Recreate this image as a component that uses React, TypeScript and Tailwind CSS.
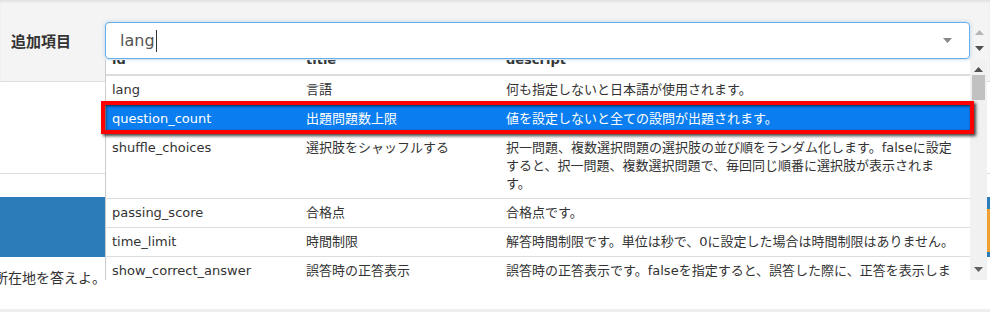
import React from "react";

type Row = { id: string; title: string; desc: string[]; active?: boolean };

const rows: Row[] = [
  { id: "lang", title: "言語", desc: ["何も指定しないと日本語が使用されます。"] },
  { id: "question_count", title: "出題問題数上限", desc: ["値を設定しないと全ての設問が出題されます。"], active: true },
  {
    id: "shuffle_choices",
    title: "選択肢をシャッフルする",
    desc: [
      "択一問題、複数選択問題の選択肢の並び順をランダム化します。falseに設定",
      "すると、択一問題、複数選択問題で、毎回同じ順番に選択肢が表示されま",
      "す。",
    ],
  },
  { id: "passing_score", title: "合格点", desc: ["合格点です。"] },
  { id: "time_limit", title: "時間制限", desc: ["解答時間制限です。単位は秒で、0に設定した場合は時間制限はありません。"] },
  {
    id: "show_correct_answer",
    title: "誤答時の正答表示",
    desc: ["誤答時の正答表示です。falseを指定すると、誤答した際に、正答を表示しま", "す。"],
  },
];

function Tri({ up, color }: { up?: boolean; color: string }) {
  return (
    <svg width="9" height="5" viewBox="0 0 9 5" className="block">
      {up ? <polygon points="0,5 9,5 4.5,0" fill={color} /> : <polygon points="0,0 9,0 4.5,5" fill={color} />}
    </svg>
  );
}

export default function App() {
  return (
    <div className="relative w-[990px] h-[312px] overflow-hidden bg-white text-[#333] font-['DejaVu_Sans','Noto_Sans_CJK_JP',sans-serif]">
      {/* form row */}
      <div className="h-[82px] bg-[#f4f4f4] border-b border-[#dddddd] shadow-[inset_0_2px_2px_rgba(0,0,0,0.07)] flex items-start pt-[22px]">
        <div className="w-[105px] pl-[11px] font-bold text-[15px] leading-[37px] text-[#333] font-['Noto_Sans_CJK_JP',sans-serif]">
          追加項目
        </div>
        <div className="relative z-20 w-[865px] h-[37px] bg-white border border-[#66afe9] rounded-[4px] shadow-[0_0_4px_rgba(102,175,233,0.45)] flex items-center pl-[14px]">
          <span className="text-[16px] text-[#555] leading-[20px]">lang</span>
          <span className="ml-[1px] w-px h-[22px] bg-[#333]" />
          <div className="ml-auto mr-[17px]">
            <Tri color="#888" />
          </div>
        </div>
        <div className="w-[18px] h-[37px] flex flex-col items-center justify-between pt-[8px] pb-[8px]">
          <Tri up color="#b4b4b4" />
          <Tri color="#505050" />
        </div>
      </div>

      <div className="h-[92px] border-b border-[#dddddd]" />
      <div className="h-[23px]" />
      <div className="h-[60px] bg-[#2b7cb8] flex justify-end items-start pt-[12px]">
        <div className="w-[5px] h-[43px] bg-[#f0a030]" />
      </div>
      <div className="h-[52px] pt-[10px] text-[14px] leading-[20px] text-[#333] ml-[-6px] font-['Noto_Sans_CJK_JP',sans-serif]">
        所在地を答えよ。
      </div>
      <div className="h-[3px] bg-[#eeeeee]" />

      {/* dropdown */}
      <div className="absolute left-[105px] top-[60px] w-[882px] h-[220px] z-10 flex">
        <div className="w-[865px] h-full bg-white border-l border-[#cccccc] overflow-hidden text-[13px] leading-[18px]">
          <div className="mt-[-14px] flex border-b-2 border-[#dddddd] font-bold">
            <div className="w-[193px] pl-[6px] py-[5px]">id</div>
            <div className="w-[200px] pl-[7px] py-[5px]">title</div>
            <div className="flex-1 pl-[7px] py-[5px]">descript</div>
          </div>
          {rows.map((r) => (
            <div
              key={r.id}
              className={r.active ? "flex border-b border-[#dddddd] bg-[#0a7ef0] text-white" : "flex border-b border-[#dddddd]"}
            >
              <div className="w-[193px] pl-[6px] py-[5px] whitespace-nowrap">{r.id}</div>
              <div className="w-[200px] pl-[7px] py-[5px] whitespace-nowrap">{r.title}</div>
              <div className="flex-1 pl-[7px] py-[5px] whitespace-nowrap">
                {r.desc.map((l, i) => (
                  <div key={i}>{l}</div>
                ))}
              </div>
            </div>
          ))}
        </div>
        <div className="w-[17px] h-full bg-[#f1f1f1] flex flex-col items-center pt-[7px] pb-[8px]">
          <Tri up color="#505050" />
          <div className="mt-[3px] w-[13px] h-[25px] bg-[#c1c1c1]" />
          <div className="mt-auto">
            <Tri color="#606060" />
          </div>
        </div>
      </div>

      {/* red highlight box */}
      <div className="absolute left-[101px] top-[101px] w-[873px] h-[33px] z-30 border-4 border-[#ff0000] shadow-[2px_2px_3px_rgba(0,0,0,0.75),inset_1px_1px_3px_rgba(0,0,0,0.7)]" />
    </div>
  );
}
